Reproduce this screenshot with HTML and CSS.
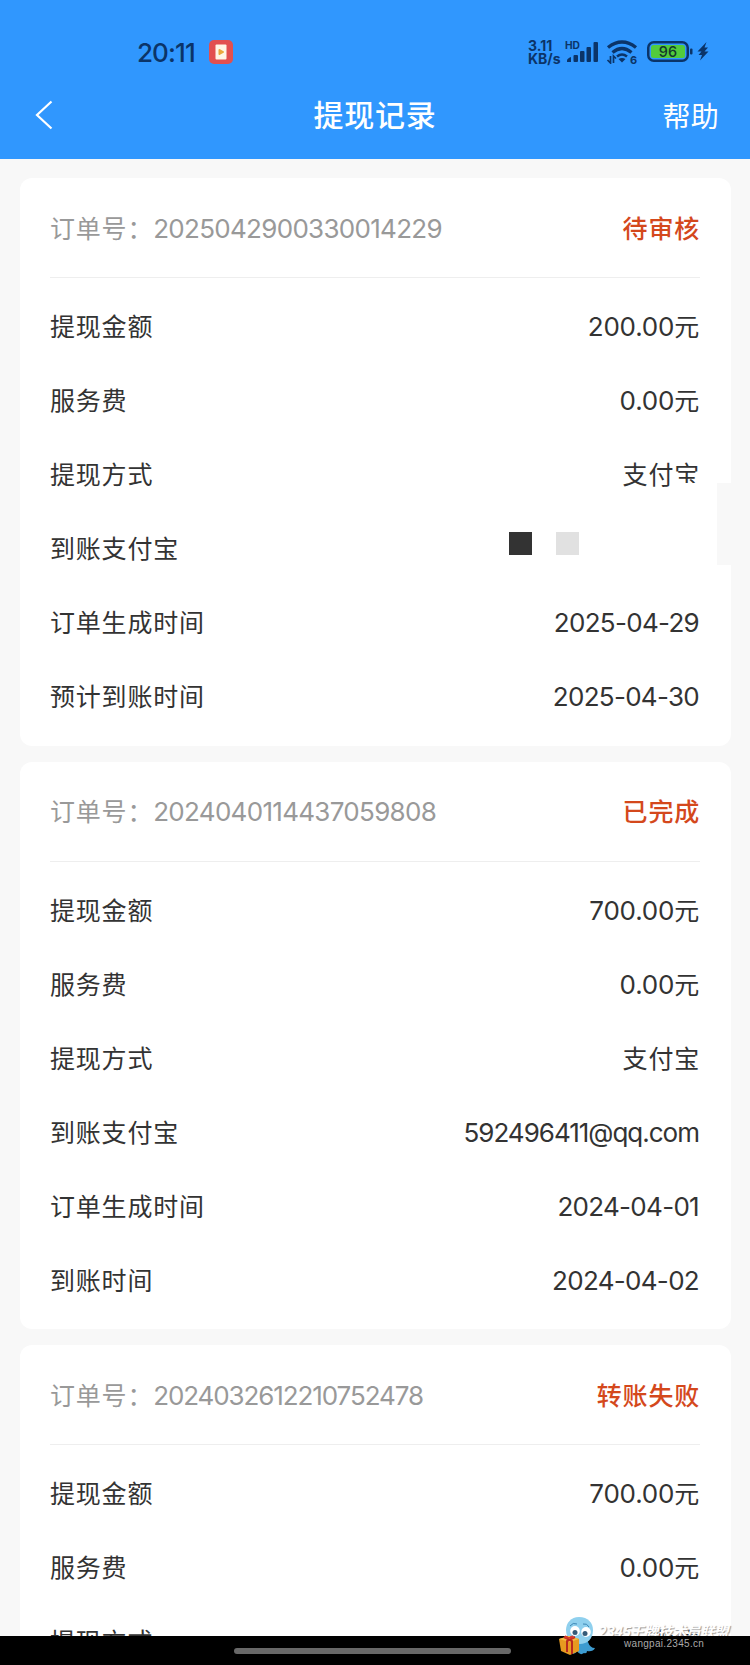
FILE: index.html
```html
<!DOCTYPE html>
<html lang="zh-CN">
<head>
    <meta charset="UTF-8">
    <meta name="viewport" content="width=device-width, initial-scale=1.0">
    <title>提现记录</title>
    <link rel="stylesheet" href="styles.css">
</head>
<body>
    <div class="page">
        <header class="header">
            <div class="status-bar">
                <span class="time">20:11</span>
                <svg class="app-icon" width="24" height="24" viewBox="0 0 24 24">
                    <rect width="24" height="24" rx="5" fill="#e2504f"/>
                    <rect x="6.5" y="4.5" width="11" height="15" rx="1" fill="#fff6e6"/>
                    <path d="M10.500 10l3.500 2-3.500 2z" fill="#e9a93c" stroke="#e9a93c" stroke-width="2" stroke-linejoin="round"/>
                </svg>
                <div class="status-right">
                    <div class="speed"><span>3.11</span><span>KB/s</span></div>
                    <svg class="signal" width="34" height="24" viewBox="0 0 34 24" fill="#0b3468">
                        <text class="hd" x="0" y="8.5" textLength="15" lengthAdjust="spacingAndGlyphs">HD</text>
                        <path d="M2 22v-1.500q0-2 4-3.500v5z"/>
                        <rect x="8.500" y="15" width="4.500" height="7" rx="1"/>
                        <rect x="15" y="11" width="4.500" height="11" rx="1"/>
                        <rect x="21.500" y="7" width="4.500" height="15" rx="1"/>
                        <rect x="28.500" y="2" width="4.500" height="20" rx="1"/>
                    </svg>
                    <svg class="wifi" width="32" height="24" viewBox="0 0 32 24" fill="none" stroke="#0b3468">
                        <path d="M2 7.500Q16-3.500 30 7.500" stroke-width="3.400"/>
                        <path d="M6.500 12.500Q16 4.500 25.500 12.500" stroke-width="3.200"/>
                        <path d="M11 16.500Q16 12.500 21 16.500" stroke-width="2.600"/>
                        <path d="M12.500 19Q16 17 19.500 19L16 22.500z" fill="#0b3468" stroke="none"/>
                        <path d="M4.500 16v7l-3-3M7.500 23v-7l2.500 2.500" stroke-width="1.700"/>
                        <text class="gen" x="24" y="23.500">6</text>
                    </svg>
                    <svg class="battery" width="62" height="24" viewBox="0 0 62 24">
                        <rect x="1.250" y="2.250" width="39.500" height="18.500" rx="5.500" fill="none" stroke="#0b3468" stroke-width="2.500"/>
                        <rect x="4" y="5" width="34" height="13" rx="2.500" fill="#52cb3c"/>
                        <rect x="43" y="8.500" width="2.500" height="6" rx="1" fill="#0b3468"/>
                        <text class="percent" x="21" y="16.500" text-anchor="middle">96</text>
                        <path d="M59.500 2L50.500 11.500h4L51.500 15h3.500L53 20.500l8.500-9h-4l3.500-4h-3.500z" fill="#0b3468"/>
                    </svg>
                </div>
            </div>
            <div class="nav">
                <svg class="back" width="18" height="30" viewBox="0 0 18 30">
                    <path d="M16.500 1.500L2 15l14.500 13.500" fill="none" stroke="#fff" stroke-width="2.200"/>
                </svg>
                <h1 class="title">提现记录</h1>
                <span class="help">帮助</span>
            </div>
        </header>

        <main class="list">
            <!-- Pending -->
            <section class="card">
                <div class="card-head">
                    <span class="order">订单号：<span class="num">2025042900330014229</span></span>
                    <span class="state">待审核</span>
                </div>
                <div class="rows">
                    <div class="row"><span>提现金额</span><span><span class="num amount">200.00</span>元</span></div>
                    <div class="row"><span>服务费</span><span><span class="num amount">0.00</span>元</span></div>
                    <div class="row"><span>提现方式</span><span class="clipped">支付宝</span></div>
                    <div class="row">
                        <span>到账支付宝</span>
                        <span class="blocks"><i class="block dark"></i><i class="block light"></i></span>
                    </div>
                    <div class="row"><span>订单生成时间</span><span class="num value">2025-04-29</span></div>
                    <div class="row"><span>预计到账时间</span><span class="num value">2025-04-30</span></div>
                </div>
                <div class="side-tab"></div>
            </section>

            <!-- Completed -->
            <section class="card">
                <div class="card-head">
                    <span class="order">订单号：<span class="num">2024040114437059808</span></span>
                    <span class="state">已完成</span>
                </div>
                <div class="rows">
                    <div class="row"><span>提现金额</span><span><span class="num amount">700.00</span>元</span></div>
                    <div class="row"><span>服务费</span><span><span class="num amount">0.00</span>元</span></div>
                    <div class="row"><span>提现方式</span><span>支付宝</span></div>
                    <div class="row"><span>到账支付宝</span><span class="num value email">592496411@qq.com</span></div>
                    <div class="row"><span>订单生成时间</span><span class="num value">2024-04-01</span></div>
                    <div class="row"><span>到账时间</span><span class="num value">2024-04-02</span></div>
                </div>
            </section>

            <!-- Failed -->
            <section class="card">
                <div class="card-head">
                    <span class="order">订单号：<span class="num tight">2024032612210752478</span></span>
                    <span class="state">转账失败</span>
                </div>
                <div class="rows">
                    <div class="row"><span>提现金额</span><span><span class="num amount">700.00</span>元</span></div>
                    <div class="row"><span>服务费</span><span><span class="num amount">0.00</span>元</span></div>
                    <div class="row"><span>提现方式</span><span>微信</span></div>
                </div>
            </section>
        </main>

        <footer class="home-bar"><div class="home-line"></div></footer>

        <div class="watermark">
            <svg class="mascot" width="40" height="40" viewBox="0 0 40 40">
                <path d="M14 22q-2 12 0 15 4 2 6-2 3 5 7 2 3 1 3-2 6 1 8-3-5 0-7-6l-2-6z" fill="#3d9bd0"/>
                <path d="M22 1c9 0 14 6 14 13 0 9-6 14-13 14S9 23 9 14C9 7 14 1 22 1z" fill="#8fd0ee"/>
                <path d="M13 10q3-4 7-2M26 8q4-1 6 3" fill="none" stroke="#3b86b5"/>
                <ellipse cx="18" cy="15" rx="4.800" ry="5" fill="#fff"/>
                <ellipse cx="29" cy="16" rx="4.800" ry="5" fill="#fff"/>
                <circle cx="18" cy="16.500" r="2.500" fill="#355b78"/>
                <circle cx="28" cy="17.500" r="2.500" fill="#355b78"/>
                <path d="M2 23l10-3 10 3v12l-9 4-9-4z" fill="#e79a20"/>
                <path d="M2 23l10-3 10 3-9 3z" fill="#f4bd45"/>
                <path d="M7 21l8 4v13M18 21l-8 4v11" fill="none" stroke="#b9291f" stroke-width="2"/>
                <path d="M12 22q-5-4-4 0zM12 22q4-4 5 0z" fill="#d8382b" stroke="#d8382b"/>
            </svg>
            <div class="mark-text">
                <div class="mark-name">2345王牌技术员联盟</div>
                <div class="mark-url">wangpai.2345.cn</div>
            </div>
        </div>
    </div>
</body>
</html>
```
FILE: styles.css
```css
* {
    box-sizing: border-box;
}
body {
    margin: 0;
    font-family: 'Noto Sans CJK SC', sans-serif;
    font-size: 25px;
    letter-spacing: 0.8px;
    color: #333;
    background: #f8f8f8;
}
.page {
    position: relative;
    display: flex;
    flex-direction: column;
    width: 750px;
    height: 1665px;
    overflow: hidden;
}
.header {
    flex: none;
    height: 159px;
    padding-top: 34px;
    background: #3097fe;
}
.status-bar {
    display: flex;
    align-items: center;
    height: 36px;
    padding: 0 41px 0 137px;
    font-family: Inter, sans-serif;
    color: #0b3468;
    letter-spacing: 0;
}
.time {
    width: 72px;
    font-size: 26px;
    font-weight: 500;
    letter-spacing: -0.9px;
}
.status-right {
    display: flex;
    align-items: center;
    margin-left: auto;
}
.speed {
    display: flex;
    flex-direction: column;
    width: 37px;
    font-size: 14px;
    font-weight: 700;
    line-height: 13px;
}
.wifi {
    margin-left: 7px;
}
.battery {
    margin-left: 9px;
}
.hd {
    font-size: 10px;
    font-weight: 700;
}
.gen {
    font-size: 11px;
    font-weight: 700;
    fill: #0b3468;
    stroke: none;
}
.percent {
    font-size: 14.500px;
    font-weight: 500;
    fill: #12382a;
}
.nav {
    display: grid;
    grid-template-columns: 1fr auto 1fr;
    align-items: center;
    height: 89px;
    padding: 0 31px 0 35px;
    color: #fff;
}
.title {
    margin: -3px 4px 0 0;
    font-size: 30px;
    font-weight: 500;
    letter-spacing: 0.8px;
}
.help {
    justify-self: end;
    font-size: 28px;
    letter-spacing: 0.3px;
}
.list {
    display: flex;
    flex: 1;
    flex-direction: column;
    gap: 16px;
    min-height: 0;
    padding: 19px 19px 0 20px;
    overflow: hidden;
}
.card {
    position: relative;
    flex: none;
    height: 567.500px;
    padding: 0 31px 0 30px;
    background: #fff;
    border-radius: 12px;
}
.card-head {
    display: flex;
    align-items: center;
    justify-content: space-between;
    height: 100px;
    padding-bottom: 2px;
    border-bottom: 1px solid #eee;
}
.order {
    color: #999;
}
.state {
    color: #d4481c;
    font-weight: 500;
}
.rows {
    padding-top: 12px;
}
.row {
    display: flex;
    align-items: center;
    justify-content: space-between;
    height: 74px;
    padding-bottom: 4px;
}
.num {
    font-family: Inter, sans-serif;
    font-size: 26px;
    letter-spacing: -0.7px;
}
.amount {
    letter-spacing: -0.2px;
}
.value {
    padding: 3px 1px 0 0;
}
.email {
    letter-spacing: -1px;
}
.tight {
    letter-spacing: -1.1px;
}
/* The lower edge of the last character is hidden */
.clipped {
    position: relative;
}
.clipped::after {
    content: "";
    position: absolute;
    right: 0;
    bottom: 0;
    width: 25px;
    height: 8px;
    background: #fff;
}
.blocks {
    display: flex;
    gap: 24px;
    margin: -7px 121px 0 0;
}
.block {
    width: 23px;
    height: 23px;
}
.dark {
    background: #333;
}
.light {
    background: #e1e1e1;
}
.side-tab {
    position: absolute;
    top: 305px;
    right: -19px;
    width: 33px;
    height: 82px;
    background: #f8f8f8;
}
.home-bar {
    display: flex;
    flex: none;
    justify-content: center;
    height: 29px;
    padding: 12px 5px 0 0;
    background: #000;
}
.home-line {
    width: 277px;
    height: 6px;
    border-radius: 3px;
    background: #686868;
}
/* Site mark over the bottom right corner */
.watermark {
    position: absolute;
    left: 557px;
    top: 1616px;
    display: flex;
}
.mark-text {
    width: 140px;
    padding-top: 5px;
}
.mark-name {
    height: 15px;
    overflow: hidden;
    font-size: 14.500px;
    font-weight: 700;
    font-style: italic;
    line-height: 20px;
    letter-spacing: -0.4px;
    white-space: nowrap;
    color: #fff;
    text-shadow: 1px 1px 1px #999;
}
.mark-url {
    padding-left: 27px;
    font-family: 'Liberation Sans', sans-serif;
    font-size: 10px;
    line-height: 16px;
    letter-spacing: 0.3px;
    color: #aaa;
}
```
